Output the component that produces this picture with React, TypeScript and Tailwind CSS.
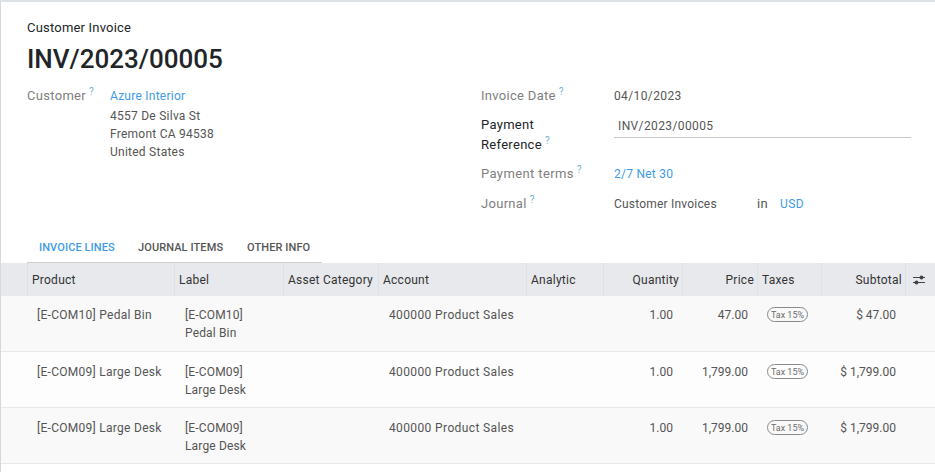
const gridCols =
  "grid grid-cols-[27px_147px_109px_95px_148px_77px_79px_75px_64px_84px_29px]";

const rows = [
  { product: "[E-COM10] Pedal Bin", code: "[E-COM10]", name: "Pedal Bin", price: "47.00", subtotal: "$ 47.00" },
  { product: "[E-COM09] Large Desk", code: "[E-COM09]", name: "Large Desk", price: "1,799.00", subtotal: "$ 1,799.00" },
  { product: "[E-COM09] Large Desk", code: "[E-COM09]", name: "Large Desk", price: "1,799.00", subtotal: "$ 1,799.00" },
];

function Help() {
  return <sup className="ml-[3px] text-[10px] tracking-normal text-[#6fb5d6] leading-none">?</sup>;
}

function Head({ label, right }: { label?: string; right?: boolean }) {
  return (
    <div
      className={`flex items-center pl-[4px] pr-[3px] border-r border-[#dee2e6] whitespace-nowrap ${
        right ? "justify-end" : ""
      }`}
    >
      {label}
    </div>
  );
}

export default function App() {
  return (
    <div className="w-[935px] h-[472px] overflow-hidden bg-white border-l border-t-2 border-l-[#d8d8d8] border-t-[#dee2e6] font-['Roboto',sans-serif] text-[12px] tracking-[0.25px] text-[#555555]">
      <div className="pl-[26px] pt-[16px]">
        <div className="text-[13px] leading-[20px] tracking-[0.2px] text-[#212529]">Customer Invoice</div>
        <h1 className="mt-[4px] text-[26px] leading-[34px] tracking-normal font-medium text-[#212529]">INV/2023/00005</h1>
      </div>

      <div className="flex mt-[10px] pl-[26px]">
        <div className="w-[454px] flex">
          <div className="w-[83px] text-[13px] tracking-[0.3px] text-[#808080] leading-[20px]">
            Customer
            <Help />
          </div>
          <div className="leading-[18px]">
            <div className="text-[#3d9be9] leading-[20px]">Azure Interior</div>
            <div className="mt-[1px]">4557 De Silva St</div>
            <div>Fremont CA 94538</div>
            <div>United States</div>
          </div>
        </div>
        <div className="flex-1">
          <div className="flex h-[20px] items-center">
            <div className="w-[133px] text-[13px] tracking-[0.3px] text-[#808080]">
              Invoice Date
              <Help />
            </div>
            <div className="tracking-[0.38px]">04/10/2023</div>
          </div>
          <div className="flex mt-[9px] h-[40px]">
            <div className="w-[133px] text-[13px] tracking-[0.3px] leading-[20px] text-[#212529]">
              Payment
              <br />
              Reference
              <Help />
            </div>
            <div className="w-[297px] h-[23px] pl-[4px] border-b border-[#c8c8c8] tracking-[0.38px] leading-[23px]">
              INV/2023/00005
            </div>
          </div>
          <div className="flex mt-[9px] h-[20px] items-center">
            <div className="w-[133px] text-[13px] tracking-[0.38px] text-[#808080]">
              Payment terms
              <Help />
            </div>
            <div className="text-[#3d9be9]">2/7 Net 30</div>
          </div>
          <div className="flex mt-[10px] h-[20px] items-center">
            <div className="w-[133px] text-[13px] tracking-[0.3px] text-[#808080]">
              Journal
              <Help />
            </div>
            <div className="w-[143px] tracking-[0.2px]">Customer Invoices</div>
            <div className="w-[23px] text-[13px]">in</div>
            <div className="text-[#3d9be9] tracking-[0.38px]">USD</div>
          </div>
        </div>
      </div>

      <div className="flex mt-[17px] ml-[26px] w-[295px] h-[32px] border-b border-[#d0d0d0] text-[11px] tracking-[0.1px] font-medium">
        <div className="pl-[12px] w-[100px] pt-[9px] text-[#3d9be9]">INVOICE LINES</div>
        <div className="pl-[11px] w-[109px] pt-[9px] text-[#555555]">JOURNAL ITEMS</div>
        <div className="pl-[11px] pt-[9px] text-[#555555]">OTHER INFO</div>
      </div>

      <div className={`${gridCols} h-[33px] bg-[#e7e9ed] text-[#333333] tracking-[0.25px]`}>
        <Head />
        <Head label="Product" />
        <Head label="Label" />
        <Head label="Asset Category" />
        <Head label="Account" />
        <Head label="Analytic" />
        <Head label="Quantity" right />
        <Head label="Price" right />
        <Head label="Taxes" />
        <Head label="Subtotal" right />
        <div className="flex items-center justify-center pr-[4px]">
          <svg width="12" height="10" viewBox="0 0 12 10" className="text-[#444444]">
            <path d="M0 2.5h12M0 7.5h12" stroke="currentColor" strokeWidth="1" />
            <circle cx="8.5" cy="2.5" r="2" fill="currentColor" />
            <circle cx="3.5" cy="7.5" r="2" fill="currentColor" />
          </svg>
        </div>
      </div>

      {rows.map((r, i) => (
        <div
          key={i}
          className={`${gridCols} h-[56px] ${
            i % 2 === 0 ? "bg-[#f9f9f9]" : "bg-[#fdfdfd]"
          } ${i === 0 ? "pt-[10px]" : "pt-[11px]"} border-b border-[#e6e8ea] leading-[18px]`}
        >
          <div />
          <div className="pl-[9px] whitespace-nowrap tracking-[0.28px]">{r.product}</div>
          <div className="pl-[10px] tracking-[0.15px]">
            <div>{r.code}</div>
            <div>{r.name}</div>
          </div>
          <div />
          <div className="pl-[10px] whitespace-nowrap tracking-[0.38px]">400000 Product Sales</div>
          <div />
          <div className="pr-[10px] text-right tracking-normal">1.00</div>
          <div className="pr-[10px] text-right tracking-normal">{r.price}</div>
          <div className="pl-[9px]">
            <span className="inline-flex items-center justify-center w-[41px] h-[15px] -mt-[2px] rounded-full border border-[#8a8a8a] text-[9px] tracking-normal text-[#6c6c6c] whitespace-nowrap align-middle">
              Tax 15%
            </span>
          </div>
          <div className="pr-[10px] text-right whitespace-nowrap tracking-normal">{r.subtotal}</div>
          <div />
        </div>
      ))}
    </div>
  );
}
